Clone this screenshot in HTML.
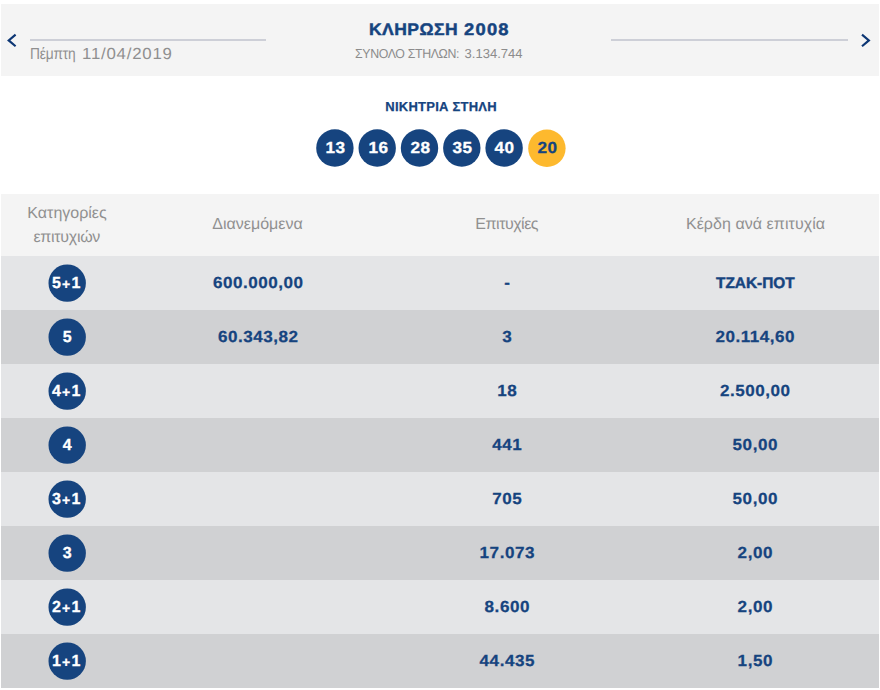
<!DOCTYPE html>
<html lang="el">
<head>
<meta charset="utf-8">
<title>ΚΛΗΡΩΣΗ 2008</title>
<style>
  html, body { margin: 0; padding: 0; }
  body {
    width: 880px; height: 690px; position: relative; overflow: hidden;
    background: #ffffff;
    font-family: "Liberation Sans", sans-serif;
    color: #16447f;
    text-rendering: geometricPrecision;
  }
  .abs { position: absolute; }
  .ball, .cat, .v { z-index: 2; }
  .ctr { position: absolute; white-space: nowrap; transform: translateX(-50%); text-align: center; }

  /* top header band */
  #hdr { left: 1px; top: 4px; width: 878px; height: 72px; background: #f4f4f4; }
  .hline { height: 2px; background: #cdcfd7; top: 39px; }
  #title1, #title2 { position: absolute; top: 18.8px; font-size: 16.7px; line-height: 22px; font-weight: bold; color: #16447f;
    white-space: nowrap; transform-origin: 0 50%; -webkit-text-stroke: 0.45px #16447f; }
  #title1 { left: 369.2px; letter-spacing: 0.42px; transform: scaleX(1.05); }
  #title2 { left: 464.4px; letter-spacing: 1.12px; transform: scaleX(1.10); }
  #sub1, #sub2 { position: absolute; top: 46px; font-size: 13px; line-height: 16px; color: #8c8c8c; white-space: nowrap; transform-origin: 0 50%; }
  #sub1 { left: 354.8px; letter-spacing: -0.38px; transform: scaleX(0.95); }
  #sub2 { left: 464.6px; }
  #date1, #date2 { position: absolute; top: 45.4px; font-size: 16px; line-height: 20px; color: #8f8f8f; white-space: nowrap; transform-origin: 0 50%; }
  #date1 { left: 29.8px; letter-spacing: -0.2px; transform: scaleX(0.86); }
  #date2 { left: 81.5px; letter-spacing: 0.75px; transform: scaleX(1.05); }

  /* winning column */
  #win { left: 441.1px; top: 98.9px; font-size: 13px; line-height: 16px; font-weight: bold; color: #16447f; letter-spacing: 0.25px; -webkit-text-stroke: 0.25px #16447f; }
  .ball {
    position: absolute; top: 129.4px; width: 37.2px; height: 37.2px; margin-left: 0.1px; border-radius: 50%;
    color: #fff; font-weight: bold; font-size: 16px;
    line-height: 39.2px; text-align: center; letter-spacing: 0.5px; text-indent: 1.6px; transform: scaleX(1.07);
    -webkit-text-stroke: 0.3px currentColor;
  }
  .ball.joker { color: #16447f; }

  /* table */
  #thead { left: 1px; top: 194px; width: 878px; height: 62px; background: #f4f4f4; }
  .th { color: #909090; font-size: 16px; line-height: 24px; }
  .row { position: absolute; left: 1px; width: 878px; height: 54px; }
  .row.a { background: #e4e5e7; }
  .row.b { background: #d0d1d3; }
  .cat {
    position: absolute; left: 47.6px; top: 8.6px; width: 37.4px; height: 37.3px; border-radius: 50%;
    color: #fff; font-weight: bold; font-size: 16px; line-height: 37.0px;
    letter-spacing: 0.4px; text-indent: 0.4px;
    -webkit-text-stroke: 0.3px #fff;
    text-align: center; white-space: nowrap;
  }
  .cat.p { text-indent: -1.2px; letter-spacing: 1.2px; }
  .cat i { font-style: normal; font-size: 14px; position: relative; top: 1.7px; }
  .v { position: absolute; top: 1.2px; line-height: 54px; font-size: 16px; font-weight: bold;
       color: #16447f; white-space: nowrap; transform: translateX(-50%); text-align: center; }
  .c2 { left: 256.8px; } .c3 { left: 505.5px; } .c4 { left: 754.4px; }
  .n { font-size: 16px; letter-spacing: 0.5px; text-indent: 0.5px; transform: translate(-50%, 0.4px) scaleX(1.065); -webkit-text-stroke: 0.25px #16447f; }
  .t { font-size: 15.4px; -webkit-text-stroke: 0.45px #16447f; }
</style>
</head>
<body>

<div id="hdr" class="abs"></div>
<div class="abs hline" style="left:30px; width:236px;"></div>
<div class="abs hline" style="left:611px; width:237px;"></div>
<svg class="abs" style="left:5px; top:31px;" width="14" height="18" viewBox="0 0 14 18"><path d="M10.6 3.6 L3.7 9.4 L10.6 15.2" fill="none" stroke="#0c3674" stroke-width="2.15"/></svg>
<svg class="abs" style="left:859px; top:31px;" width="14" height="18" viewBox="0 0 14 18"><path d="M3 3.6 L9.9 9.4 L3 15.2" fill="none" stroke="#0c3674" stroke-width="2.15"/></svg>

<div id="title1">ΚΛΗΡΩΣΗ</div><div id="title2">2008</div>
<div id="sub1">ΣΥΝΟΛΟ ΣΤΗΛΩΝ:</div><div id="sub2">3.134.744</div>
<div id="date1">Πέμπτη</div><div id="date2">11/04/2019</div>

<div id="win" class="ctr">ΝΙΚΗΤΡΙΑ ΣΤΗΛΗ</div>
<div class="ball" style="left:316.2px;">13</div>
<div class="ball" style="left:358.5px;">16</div>
<div class="ball" style="left:400.8px;">28</div>
<div class="ball" style="left:443.1px;">35</div>
<div class="ball" style="left:485.4px;">40</div>
<div class="ball joker" style="left:528.1px;">20</div>

<div id="thead" class="abs"></div>
<div class="ctr th" style="left:67px; top:201.5px;">Κατηγορίες</div>
<div class="ctr th" style="left:66.8px; top:225.5px; letter-spacing:-0.3px;">επιτυχιών</div>
<div class="ctr th" style="left:257.5px; top:213.4px;">Διανεμόμενα</div>
<div class="ctr th" style="left:506.7px; top:213.4px; letter-spacing:-0.5px;">Επιτυχίες</div>
<div class="ctr th" style="left:755.5px; top:213.4px; letter-spacing:0.06px;">Κέρδη ανά επιτυχία</div>

<div class="row a" style="top:256px;"><div class="cat p">5<i>+</i>1</div><div class="v c2 n">600.000,00</div><div class="v c3 n">-</div><div class="v c4 t">ΤΖΑΚ-ΠΟΤ</div></div>
<div class="row b" style="top:310px;"><div class="cat">5</div><div class="v c2 n">60.343,82</div><div class="v c3 n">3</div><div class="v c4 n">20.114,60</div></div>
<div class="row a" style="top:364px;"><div class="cat p">4<i>+</i>1</div><div class="v c3 n">18</div><div class="v c4 n">2.500,00</div></div>
<div class="row b" style="top:418px;"><div class="cat">4</div><div class="v c3 n">441</div><div class="v c4 n">50,00</div></div>
<div class="row a" style="top:472px;"><div class="cat p">3<i>+</i>1</div><div class="v c3 n">705</div><div class="v c4 n">50,00</div></div>
<div class="row b" style="top:526px;"><div class="cat">3</div><div class="v c3 n">17.073</div><div class="v c4 n">2,00</div></div>
<div class="row a" style="top:580px;"><div class="cat p">2<i>+</i>1</div><div class="v c3 n">8.600</div><div class="v c4 n">2,00</div></div>
<div class="row b" style="top:634px; height:53.6px;"><div class="cat p">1<i>+</i>1</div><div class="v c3 n">44.435</div><div class="v c4 n">1,50</div></div>

<svg class="abs" style="left:0;top:0;" width="880" height="690" viewBox="0 0 880 690"><circle cx="334.9" cy="148" r="18.7" fill="#16447f"/><circle cx="377.2" cy="148" r="18.7" fill="#16447f"/><circle cx="419.5" cy="148" r="18.7" fill="#16447f"/><circle cx="461.8" cy="148" r="18.7" fill="#16447f"/><circle cx="504.1" cy="148" r="18.7" fill="#16447f"/><circle cx="546.9" cy="148.3" r="18.7" fill="#fdb92e"/><circle cx="67.2" cy="283.1" r="18.7" fill="#16447f"/><circle cx="67.2" cy="337.1" r="18.7" fill="#16447f"/><circle cx="67.2" cy="391.1" r="18.7" fill="#16447f"/><circle cx="67.2" cy="445.1" r="18.7" fill="#16447f"/><circle cx="67.2" cy="499.1" r="18.7" fill="#16447f"/><circle cx="67.2" cy="553.1" r="18.7" fill="#16447f"/><circle cx="67.2" cy="607.1" r="18.7" fill="#16447f"/><circle cx="67.2" cy="661.1" r="18.7" fill="#16447f"/></svg>
</body>
</html>
